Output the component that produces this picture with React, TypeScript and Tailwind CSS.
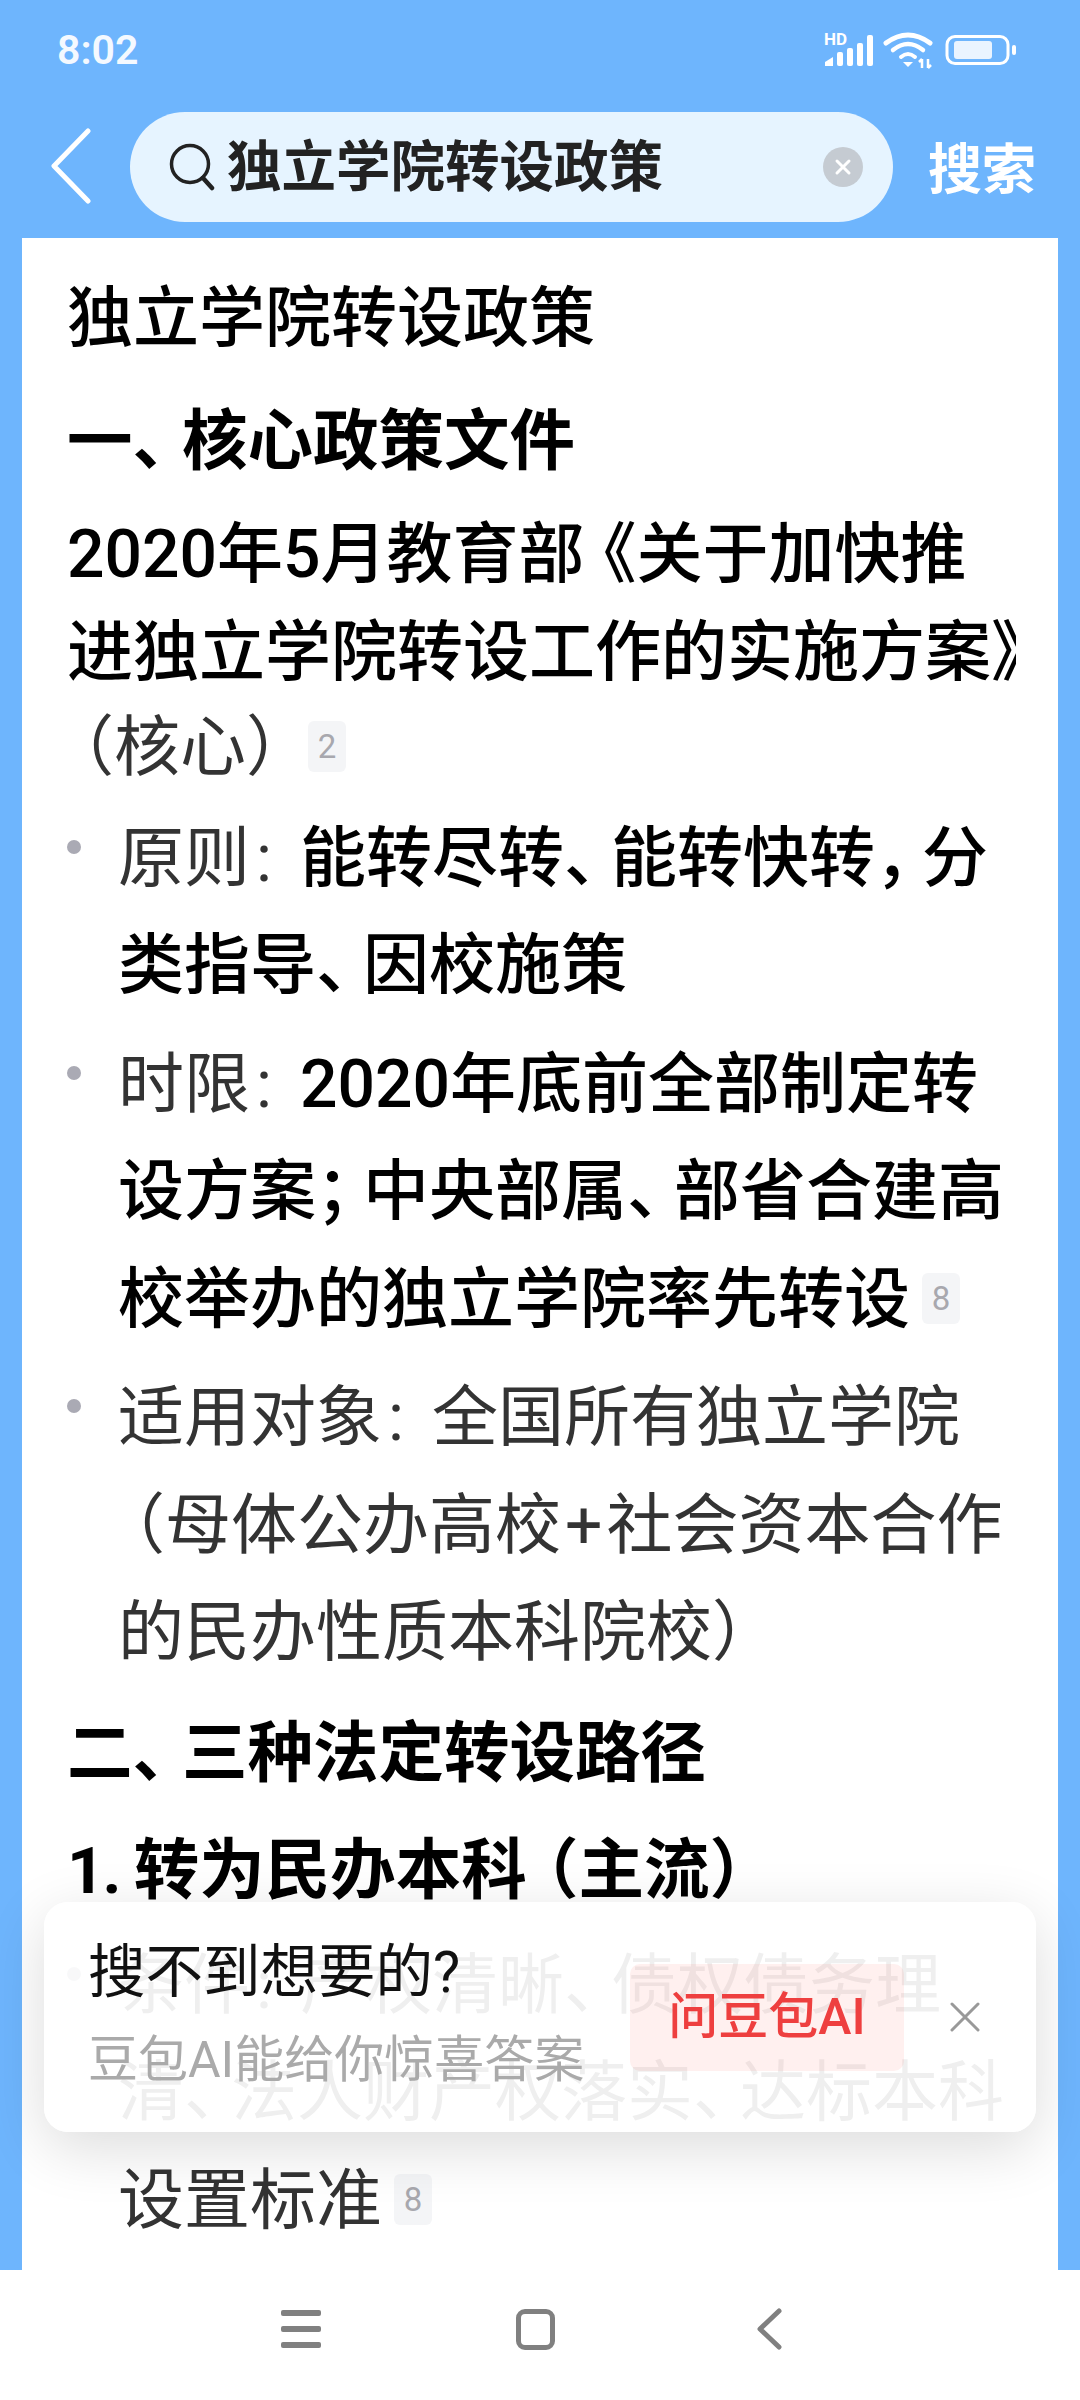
import React from "react";

const FONT = "font-['Roboto','Noto_Sans_CJK_SC',sans-serif]";

// the reference squeezes CJK punctuation to about 47px
function P({ children }: { children: React.ReactNode }) {
  return <span className="tracking-[-19px]">{children}</span>;
}

function HeadP({ children }: { children: React.ReactNode }) {
  return <span className="tracking-[-16px]">{children}</span>;
}

function Open({ children, className = "ml-[-19px]" }: { children: React.ReactNode; className?: string }) {
  return <span className={className}>{children}</span>;
}

function Colon() {
  return <span className="inline-block w-[50px] pl-[6px] font-normal">:</span>;
}

function Cite({ n }: { n: number }) {
  return (
    <span className="ml-[12px] inline-flex h-[51px] w-[38px] items-center justify-center rounded-[6px] bg-[#f4f5f7] align-[12px] text-[33px] font-normal leading-none text-[#a8a8ae]">
      {n}
    </span>
  );
}

function Bullet({ children, className = "" }: { children: React.ReactNode; className?: string }) {
  return (
    <div className={`flex gap-[37px] ${className}`}>
      <span className="mt-[35px] h-[14px] w-[14px] shrink-0 rounded-full bg-[#aaaab4]" />
      <div className="min-w-0 flex-1">{children}</div>
    </div>
  );
}

function Line({ children }: { children: React.ReactNode }) {
  return <div className="h-[107.5px] whitespace-nowrap text-[66px] leading-[107.5px]">{children}</div>;
}

function Label({ children }: { children: React.ReactNode }) {
  return <span className="font-normal text-[#333333]">{children}</span>;
}

function StatusIcons() {
  return (
    <svg width="200" height="40" viewBox="0 0 200 40" fill="none">
      <text x="6" y="15" fill="#ffffff" fontSize="17" fontWeight="700" fontFamily="Roboto, sans-serif">HD</text>
      <path d="M7 36v-4l8-5v9z" fill="#fff" />
      <rect x="19" y="22" width="6" height="14" rx="2" fill="#fff" />
      <rect x="29" y="18" width="6" height="18" rx="2" fill="#fff" />
      <rect x="39" y="13" width="6" height="23" rx="2" fill="#fff" />
      <rect x="49" y="5" width="6" height="31" rx="2" fill="#fff" />
      <path d="M68 13Q90-3 112 13" stroke="#fff" strokeWidth="5" strokeLinecap="round" />
      <path d="M75 20Q90 8 105 20" stroke="#fff" strokeWidth="4.5" strokeLinecap="round" />
      <path d="M83 27Q90 21 97 27" stroke="#fff" strokeWidth="4" strokeLinecap="round" />
      <path d="M85 32h10l-5 5z" fill="#fff" />
      <path d="M104 38V29M101 32l3-3M110 29v9M110 38l3-3" stroke="#fff" strokeWidth="2.5" />
      <rect x="129" y="6.5" width="61" height="27" rx="8" stroke="#fff" strokeWidth="3" fill="none" />
      <rect x="136" y="11" width="38" height="18" rx="3" fill="#eaf4ff" />
      <rect x="194" y="15" width="4" height="10" rx="2" fill="#fff" />
    </svg>
  );
}

export default function App() {
  return (
    <div lang="zh-CN" className={`relative flex h-[2400px] w-[1080px] flex-col overflow-hidden bg-[#6eb5fd] ${FONT}`}>
      {/* status bar */}
      <div className="flex h-[100px] items-center justify-between pl-[57px] pr-[62px]">
        <span className="text-[41px] font-semibold leading-none text-[#f4f9ff]">8:02</span>
        <StatusIcons />
      </div>

      {/* search header */}
      <div className="flex h-[138px] items-start">
        <button className="ml-[49px] mt-[28px] shrink-0">
          <svg width="44" height="76" viewBox="0 0 44 76" fill="none">
            <path d="M39 3L5 38l34 35" stroke="#fff" strokeWidth="5" strokeLinecap="round" strokeLinejoin="round" />
          </svg>
        </button>
        <div className="ml-[37px] mt-[12px] flex h-[110px] w-[763px] items-center rounded-full bg-[#e6f4ff] pl-[39px] pr-[30px]">
          <svg width="46" height="48" viewBox="0 0 46 48" fill="none" className="shrink-0">
            <circle cx="21" cy="21" r="18.5" stroke="#222" strokeWidth="3.5" />
            <path d="M34 35l9 10" stroke="#222" strokeWidth="4.5" strokeLinecap="round" />
          </svg>
          <span className="ml-[12px] flex-1 text-[54.5px] font-bold leading-none text-[#222222]">独立学院转设政策</span>
          <span className="flex h-[40px] w-[40px] items-center justify-center rounded-full bg-[#c5cbd2]">
            <svg width="18" height="18" viewBox="0 0 18 18" fill="none">
              <path d="M3 3l12 12M15 3L3 15" stroke="#fff" strokeWidth="3" strokeLinecap="round" />
            </svg>
          </span>
        </div>
        <span className="ml-[35px] mt-[44px] text-[54px] font-bold leading-none text-white">搜索</span>
      </div>

      {/* article */}
      <div className="mx-[22px] min-h-0 flex-1 overflow-hidden bg-white pl-[45px] pr-[42px] text-black">
        <div className="mt-[46px] h-[70px] text-[66px] font-medium leading-[70px]">独立学院转设政策</div>
        <div className="mt-[52px] h-[72px] text-[65.5px] font-bold leading-[72px]">一<HeadP>、</HeadP>核心政策文件</div>
        <div className="mt-[27px] font-medium">
          <div className="h-[99.5px] whitespace-nowrap text-[66px] leading-[99.5px]">2020年5月教育部<Open className="ml-[-14px]">《</Open>关于加快推</div>
          <div className="h-[96px] overflow-hidden whitespace-nowrap text-[66px] leading-[96px]">进独立学院转设工作的实施方案》</div>
          <div className="h-[93px] whitespace-nowrap text-[66px] leading-[93px]">
            <Label><Open>（</Open>核心<P>）</P></Label>
            <span className="pl-[3px]"><Cite n={2} /></span>
          </div>
        </div>

        <Bullet className="mt-[11px] font-medium">
          <Line><Label>原则<Colon /></Label>能转尽转<P>、</P>能转快转<P>，</P>分</Line>
          <Line>类指导<P>、</P>因校施策</Line>
        </Bullet>
        <Bullet className="mt-[11px] font-medium">
          <Line><Label>时限<Colon /></Label>2020年底前全部制定转</Line>
          <Line>设方案<P>；</P>中央部属<P>、</P>部省合建高</Line>
          <Line>校举办的独立学院率先转设<Cite n={8} /></Line>
        </Bullet>
        <Bullet className="mt-[11px] text-[#333333]">
          <Line>适用对象<Colon />全国所有独立学院</Line>
          <Line><Open>（</Open>母体公办高校<span className="mx-[4px]">+</span>社会资本合作</Line>
          <Line>的民办性质本科院校<P>）</P></Line>
        </Bullet>

        <div className="mt-[13px] h-[107px] text-[65.5px] font-bold leading-[107px]">二<HeadP>、</HeadP>三种法定转设路径</div>
        <div className="mt-[10px] h-[107px] text-[65.5px] font-bold leading-[107px]">
          <span className="tracking-[-2px]">1. </span>转为民办本科<Open className="ml-[-14px]">（</Open>主流<P>）</P>
        </div>
        <Bullet className="mt-[8px] text-[#333333]">
          <Line>条件<Colon />产权清晰<P>、</P>债权债务理</Line>
          <Line>清<P>、</P>法人财产权落实<P>、</P>达标本科</Line>
          <Line>设置标准<Cite n={8} /></Line>
        </Bullet>
      </div>

      {/* bottom nav */}
      <div className="flex h-[130px] shrink-0 items-center bg-white pb-[12px]">
        <svg width="40" height="38" viewBox="0 0 40 38" className="ml-[281px]" fill="#808080">
          <rect y="0" width="40" height="6" rx="2" />
          <rect y="16" width="40" height="6" rx="2" />
          <rect y="32" width="40" height="6" rx="2" />
        </svg>
        <span className="ml-[195px] h-[41px] w-[39px] rounded-[9px] border-[5px] border-[#808080]" />
        <svg width="26" height="42" viewBox="0 0 26 42" fill="none" className="ml-[201px]">
          <path d="M23 3L4 21l19 18" stroke="#808080" strokeWidth="5" strokeLinecap="round" strokeLinejoin="round" />
        </svg>
      </div>

      {/* floating prompt */}
      <div className="absolute left-[44px] top-[1902px] flex h-[230px] w-[992px] items-center rounded-[24px] bg-white/[0.92] pl-[44px] shadow-[0_16px_60px_rgba(0,0,0,0.14)]">
        <div className="w-[542px]">
          <div className="mt-[-6px] text-[57.5px] leading-[70px] text-[#111111]">搜不到想要的?</div>
          <div className="mt-[22px] whitespace-nowrap text-[50px] leading-[60px] text-[#aaaaaa]">豆包AI能给你惊喜答案</div>
        </div>
        <span className="flex h-[107px] w-[274px] items-center justify-center rounded-[10px] bg-[#ff3b30]/[0.08] text-[50px] font-medium text-[#ee3f3f]">问豆包AI</span>
        <svg width="30" height="30" viewBox="0 0 30 30" fill="none" className="ml-[46px]">
          <path d="M2 2l26 26M28 2L2 28" stroke="#999" strokeWidth="3" strokeLinecap="round" />
        </svg>
      </div>
    </div>
  );
}
